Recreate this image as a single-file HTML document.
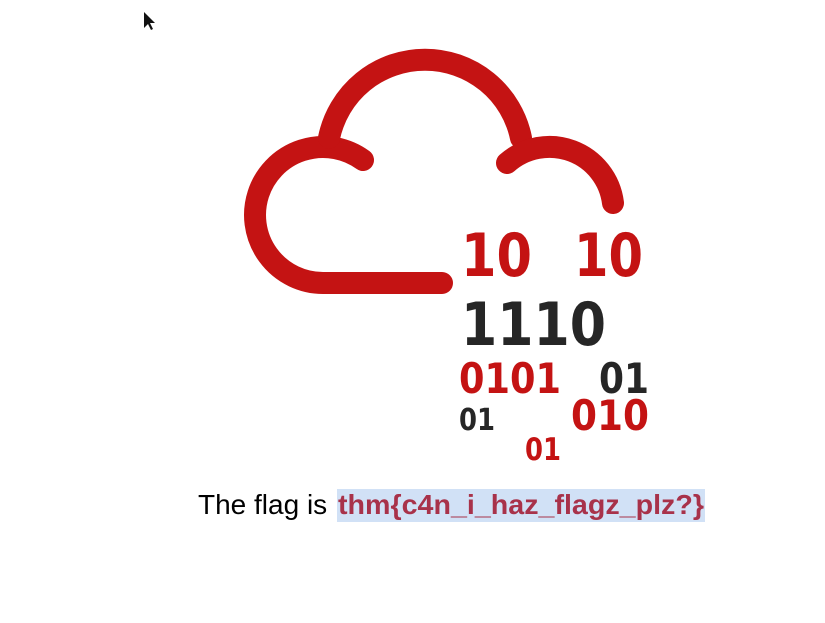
<!DOCTYPE html>
<html><head><meta charset="utf-8"><style>
html,body{margin:0;padding:0;background:#fff;width:825px;height:623px;overflow:hidden}
svg{position:absolute;left:0;top:0}
</style></head><body>
<svg width="825" height="623" viewBox="0 0 825 623" xmlns="http://www.w3.org/2000/svg">
<path d="M144,12 L144,28 L148,24 L151,30 L153,29 L150,23 L155,23 Z" fill="#111"/>
<g fill="none" stroke="#c41313" stroke-width="22" stroke-linecap="round">
<path d="M363,160 A68,68 0 1 0 323,283 L442,283"/>
<path d="M329,138 A98,98 0 0 1 521,138"/>
<path d="M507,163 A64,64 0 0 1 613,203"/>
</g>
<g font-family="'DejaVu Sans','Liberation Sans',sans-serif" font-weight="bold">
<text x="461" y="276" font-size="60" fill="#c41313" textLength="71" lengthAdjust="spacingAndGlyphs">10</text>
<text x="574" y="276" font-size="60" fill="#c41313" textLength="69" lengthAdjust="spacingAndGlyphs">10</text>
<text x="461" y="345" font-size="60" fill="#262626" textLength="145" lengthAdjust="spacingAndGlyphs">1110</text>
<text x="459" y="393" font-size="42" fill="#c41313" textLength="102" lengthAdjust="spacingAndGlyphs">0101</text>
<text x="599" y="393" font-size="42" fill="#262626" textLength="50" lengthAdjust="spacingAndGlyphs">01</text>
<text x="459" y="430" font-size="30" fill="#262626" textLength="36" lengthAdjust="spacingAndGlyphs">01</text>
<text x="571" y="430" font-size="42" fill="#c41313" textLength="78" lengthAdjust="spacingAndGlyphs">010</text>
<text x="525" y="460" font-size="31" fill="#c41313" textLength="36" lengthAdjust="spacingAndGlyphs">01</text>
</g>
<rect x="337" y="489" width="368" height="33" fill="#d1e1f6"/>
<text x="198" y="514" font-family="'Liberation Sans',sans-serif" font-size="28" fill="#000">The flag is</text>
<text x="338" y="514" font-family="'Liberation Sans',sans-serif" font-size="28" font-weight="bold" fill="#a8324a" textLength="366" lengthAdjust="spacingAndGlyphs">thm{c4n_i_haz_flagz_plz?}</text>
</svg>
</body></html>
